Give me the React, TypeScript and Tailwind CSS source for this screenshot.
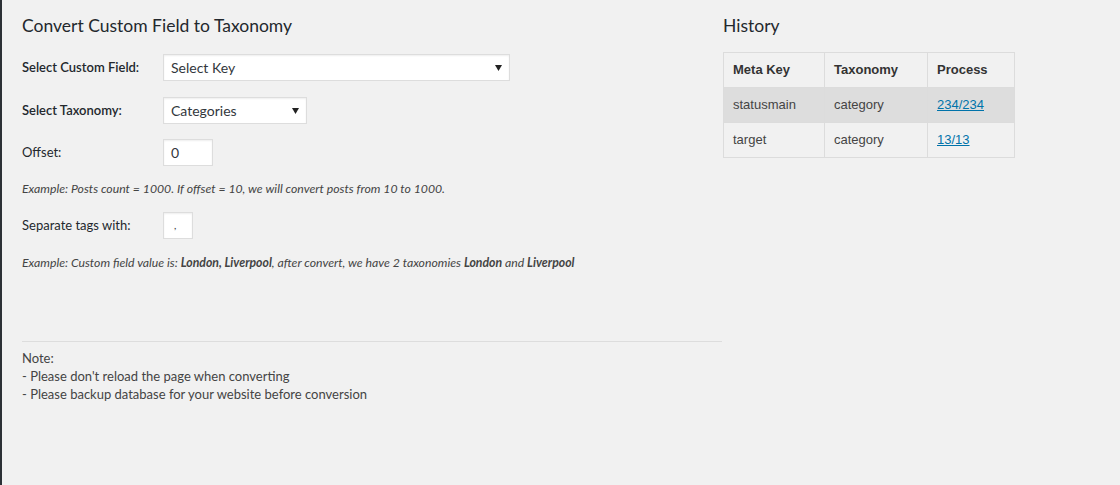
import React from 'react';

const ui = { fontFamily: 'Lato, "Open Sans", sans-serif' };
const arial = { fontFamily: '"Liberation Sans", Arial, sans-serif' };

function Arrow() {
  return (
    <svg className="w-[7px] h-[6px]" viewBox="0 0 7 6">
      <path d="M0 0h7L3.5 6z" fill="#222" />
    </svg>
  );
}

function SelectBox({ width, label }: { width: string; label: string }) {
  return (
    <div
      className={`${width} h-[27px] bg-white border border-[#dddddd] shadow-[inset_0_1px_2px_rgba(0,0,0,0.07)] flex items-center justify-between pl-[7px] pr-[7px] text-[14px] text-[#32373c]`}
    >
      <span>{label}</span>
      <Arrow />
    </div>
  );
}

function Label({ children, bold }: { children: React.ReactNode; bold?: boolean }) {
  return (
    <div className={`w-[141px] shrink-0 text-[13px] text-[#23282d] ${bold ? 'font-semibold' : ''}`}>{children}</div>
  );
}

const history = [
  { key: 'statusmain', tax: 'category', process: '234/234' },
  { key: 'target', tax: 'category', process: '13/13' },
];

export default function App() {
  return (
    <div className="w-[1120px] h-[485px] bg-[#f1f1f1] border-l-2 border-[#2c3136] flex overflow-hidden" style={ui}>
      {/* left form */}
      <div className="w-[720px] pl-[20px] pt-[14px]">
        <h2 className="text-[17.5px] leading-[24px] text-[#23282d] font-normal">Convert Custom Field to Taxonomy</h2>

        <div className="flex items-center mt-[16px]">
          <Label bold>Select Custom Field:</Label>
          <SelectBox width="w-[347px]" label="Select Key" />
        </div>

        <div className="flex items-center mt-[16px]">
          <Label bold>Select Taxonomy:</Label>
          <SelectBox width="w-[144px]" label="Categories" />
        </div>

        <div className="flex items-center mt-[15px]">
          <Label>Offset:</Label>
          <div className="w-[50px] h-[27px] bg-white border border-[#dddddd] shadow-[inset_0_1px_2px_rgba(0,0,0,0.07)] flex items-center pl-[7px] text-[14px] text-[#32373c]">
            0
          </div>
        </div>

        <p className="mt-[14px] text-[12.25px] leading-[18px] italic text-[#444]">
          Example: Posts count = 1000. If offset = 10, we will convert posts from 10 to 1000.
        </p>

        <div className="flex items-center mt-[14px]">
          <Label>Separate tags with:</Label>
          <div className="w-[30px] h-[27px] bg-white border border-[#dddddd] shadow-[inset_0_1px_2px_rgba(0,0,0,0.07)] flex items-center pl-[10px] text-[10px] text-[#32373c]">
            ,
          </div>
        </div>

        <p className="mt-[15px] text-[12.25px] leading-[18px] italic text-[#444]">
          Example: Custom field value is: <b className="font-bold">London, Liverpool</b>, after convert, we have 2 taxonomies{' '}
          <b className="font-bold">London</b> and <b className="font-bold">Liverpool</b>
        </p>

        <div className="mt-[69px] border-t border-[#dddddd]" />

        <div className="mt-[7px] text-[13px] leading-[18px] text-[#444]">
          <div>Note:</div>
          <div>- Please don't reload the page when converting</div>
          <div>- Please backup database for your website before conversion</div>
        </div>
      </div>

      {/* history */}
      <div className="pl-[1px] pt-[14px]">
        <h2 className="text-[17.5px] leading-[24px] text-[#23282d] font-normal">History</h2>
        <table className="mt-[14px] border-collapse text-[13px]" style={arial}>
          <thead>
            <tr className="h-[35px]">
              <th className="w-[101px] border border-[#dcdcdc] text-left pl-[9px] font-bold text-[#333]">Meta Key</th>
              <th className="w-[103px] border border-[#dcdcdc] text-left pl-[9px] font-bold text-[#333]">Taxonomy</th>
              <th className="w-[87px] border border-[#dcdcdc] text-left pl-[9px] font-bold text-[#333]">Process</th>
            </tr>
          </thead>
          <tbody>
            {history.map((row, i) => (
              <tr key={row.key} className={`h-[35px] ${i === 0 ? 'bg-[#dddddd]' : ''}`}>
                <td className="border border-[#dcdcdc] pl-[9px] text-[#444]">{row.key}</td>
                <td className="border border-[#dcdcdc] pl-[9px] text-[#444]">{row.tax}</td>
                <td className="border border-[#dcdcdc] pl-[9px]">
                  <a className="text-[#0073aa] underline">{row.process}</a>
                </td>
              </tr>
            ))}
          </tbody>
        </table>
      </div>
    </div>
  );
}
